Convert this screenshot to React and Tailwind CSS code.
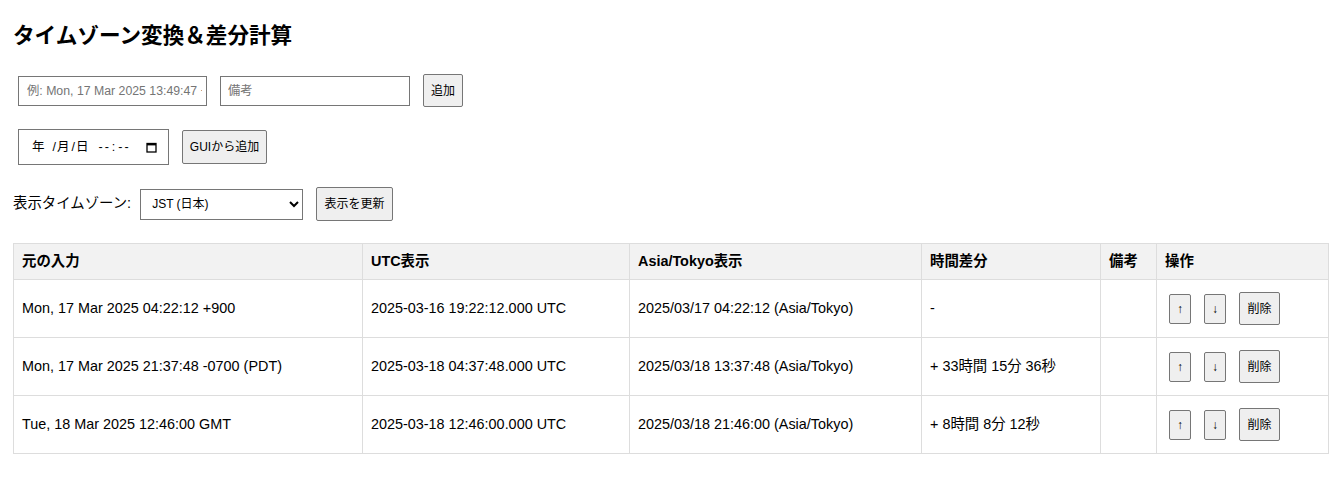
import { useState } from "react";

const rows = [
  {
    input: "Mon, 17 Mar 2025 04:22:12 +900",
    utc: "2025-03-16 19:22:12.000 UTC",
    local: "2025/03/17 04:22:12 (Asia/Tokyo)",
    diff: "-",
    note: "",
  },
  {
    input: "Mon, 17 Mar 2025 21:37:48 -0700 (PDT)",
    utc: "2025-03-18 04:37:48.000 UTC",
    local: "2025/03/18 13:37:48 (Asia/Tokyo)",
    diff: "+ 33時間 15分 36秒",
    note: "",
  },
  {
    input: "Tue, 18 Mar 2025 12:46:00 GMT",
    utc: "2025-03-18 12:46:00.000 UTC",
    local: "2025/03/18 21:46:00 (Asia/Tokyo)",
    diff: "+ 8時間 8分 12秒",
    note: "",
  },
];

const btn =
  "bg-[#efefef] border border-[#767676] rounded-[2px] text-[12px] text-black flex items-center justify-center";

function App() {
  const [tz, setTz] = useState("JST");

  return (
    <div className="min-h-[484px] bg-white text-black px-[13px] pt-[24px] font-['Liberation_Sans','Noto_Sans_CJK_JP',sans-serif] text-[14.4px]">
      <h1 className="text-[21.6px] leading-[24px] font-bold">タイムゾーン変換＆差分計算</h1>

      <div className="flex items-center h-[33px] mt-[26px]">
        <input
          type="text"
          placeholder="例: Mon, 17 Mar 2025 13:49:47 +0900"
          className="ml-[5px] w-[189px] h-[30px] border border-[#767676] pl-[8px] pr-[4px] text-[12.3px] placeholder:text-[#757575] outline-none"
        />
        <input
          type="text"
          placeholder="備考"
          className="ml-[13px] w-[190px] h-[30px] border border-[#767676] pl-[7px] text-[12.3px] placeholder:text-[#757575] outline-none"
        />
        <button className={`${btn} ml-[13px] w-[40px] h-[33px]`}>追加</button>
      </div>

      <div className="flex items-center h-[36px] mt-[22px]">
        <div className="ml-[5px] w-[151px] h-[36px] border border-[#767676] flex items-center text-[12.5px] text-black">
          <span className="ml-[13px]">年</span>
          <span className="ml-[8px]">/</span>
          <span className="ml-[1px]">月</span>
          <span className="ml-[2px]">/</span>
          <span className="ml-[1px]">日</span>
          <span className="ml-[10px] tracking-[2px]">--</span>
          <span className="ml-[1px]">:</span>
          <span className="ml-[3px] tracking-[2px]">--</span>
          <svg className="ml-auto mr-[11px]" width="11" height="11" viewBox="0 0 11 11">
            <rect x="1" y="1.5" width="9" height="8.5" fill="none" stroke="#000" strokeWidth="1.3" />
            <rect x="1" y="1" width="9" height="2.4" fill="#000" />
          </svg>
        </div>
        <button className={`${btn} ml-[13px] w-[85px] h-[34px]`}>GUIから追加</button>
      </div>

      <div className="flex items-center h-[34px] mt-[22px]">
        <span className="text-[14.4px]">表示タイムゾーン:</span>
        <select
          value={tz}
          onChange={(e) => setTz(e.target.value)}
          className="ml-[9px] w-[163px] h-[31px] border border-[#767676] pl-[7px] text-[12px] bg-white outline-none"
        >
          <option value="JST">JST (日本)</option>
          <option value="UTC">UTC</option>
          <option value="PST">PST (米国太平洋)</option>
        </select>
        <button className={`${btn} ml-[13px] w-[77px] h-[34px]`}>表示を更新</button>
      </div>

      <table className="mt-[22px] w-[1315px] table-fixed border-collapse text-left">
        <colgroup>
          <col className="w-[349px]" />
          <col className="w-[267px]" />
          <col className="w-[292px]" />
          <col className="w-[179px]" />
          <col className="w-[56px]" />
          <col className="w-[172px]" />
        </colgroup>
        <thead>
          <tr className="bg-[#f2f2f2] h-[36px]">
            {["元の入力", "UTC表示", "Asia/Tokyo表示", "時間差分", "備考", "操作"].map((h) => (
              <th key={h} className="border border-[#dddddd] px-[8px] py-0 font-bold align-middle">
                {h}
              </th>
            ))}
          </tr>
        </thead>
        <tbody>
          {rows.map((r, i) => (
            <tr key={i} className="h-[58px]">
              <td className="border border-[#dddddd] px-[8px] align-middle">{r.input}</td>
              <td className="border border-[#dddddd] px-[8px] align-middle">{r.utc}</td>
              <td className="border border-[#dddddd] px-[8px] align-middle">{r.local}</td>
              <td className="border border-[#dddddd] px-[8px] align-middle">{r.diff}</td>
              <td className="border border-[#dddddd] px-[8px] align-middle">{r.note}</td>
              <td className="border border-[#dddddd] pl-[12px] align-middle">
                <div className="flex items-center">
                  <button className={`${btn} w-[22px] h-[30px] text-[10px]`}>↑</button>
                  <button className={`${btn} ml-[13px] w-[22px] h-[30px] text-[10px]`}>↓</button>
                  <button className={`${btn} ml-[13px] w-[41px] h-[33px]`}>削除</button>
                </div>
              </td>
            </tr>
          ))}
        </tbody>
      </table>
    </div>
  );
}

export default App;
